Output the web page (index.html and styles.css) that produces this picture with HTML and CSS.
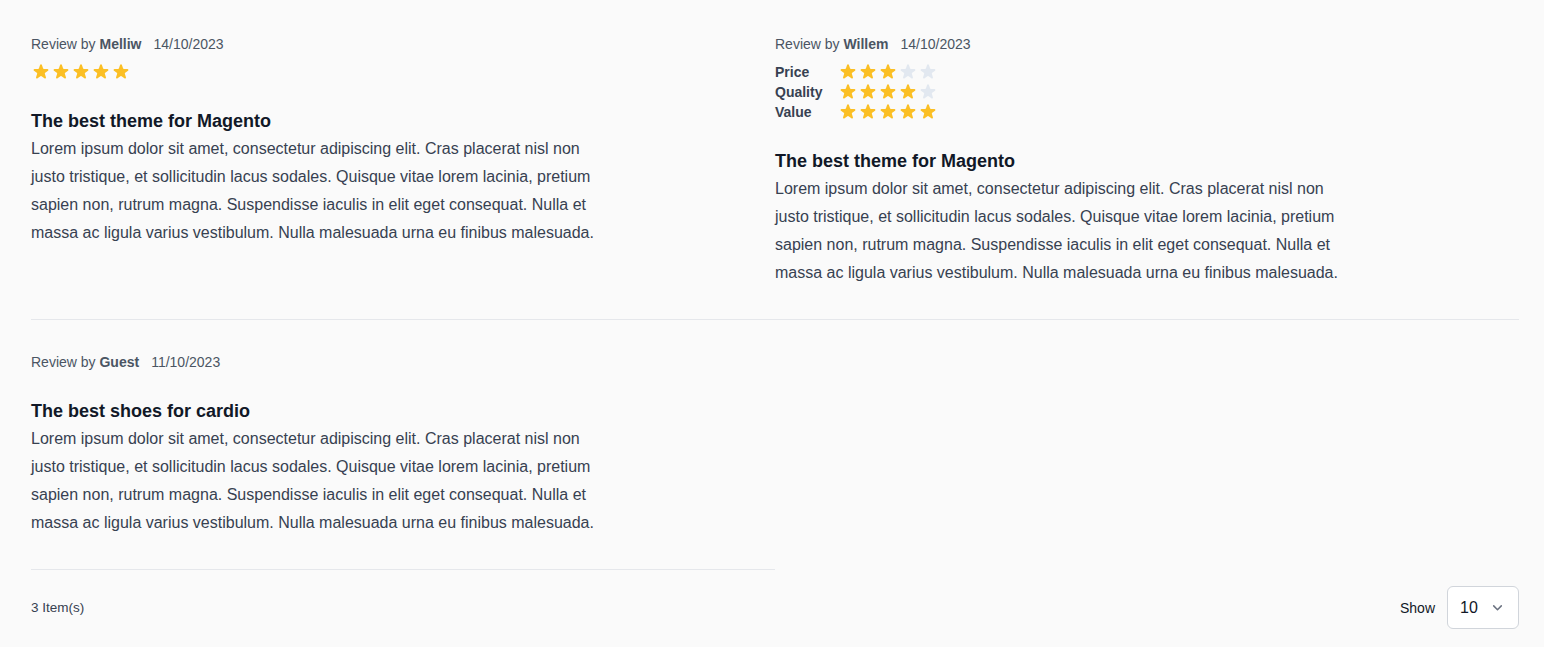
FILE: index.html
```html
<!DOCTYPE html>
<html lang="en">
<head>
<meta charset="utf-8">
<title>Reviews</title>
<link rel="stylesheet" href="styles.css">
</head>
<body>
<svg width="0" height="0" class="defs">
  <defs>
    <path id="star" d="M9.049 2.927c.3-.921 1.603-.921 1.902 0l1.07 3.292a1 1 0 00.95.69h3.462c.969 0 1.371 1.24.588 1.81l-2.8 2.034a1 1 0 00-.364 1.118l1.07 3.292c.3.921-.755 1.688-1.54 1.118l-2.8-2.034a1 1 0 00-1.175 0l-2.8 2.034c-.784.57-1.838-.197-1.539-1.118l1.07-3.292a1 1 0 00-.364-1.118L2.98 8.72c-.783-.57-.38-1.81.588-1.81h3.461a1 1 0 00.951-.69l1.07-3.292z"/>
  </defs>
</svg>
<main class="page">
  <div class="reviews">
    <article class="review">
      <div class="meta">Review by <strong>Melliw</strong><span class="date">14/10/2023</span></div>
      <div class="stars">
        <svg class="star on" viewBox="0 0 20 20"><use href="#star"/></svg>
        <svg class="star on" viewBox="0 0 20 20"><use href="#star"/></svg>
        <svg class="star on" viewBox="0 0 20 20"><use href="#star"/></svg>
        <svg class="star on" viewBox="0 0 20 20"><use href="#star"/></svg>
        <svg class="star on" viewBox="0 0 20 20"><use href="#star"/></svg>
      </div>
      <h3 class="title">The best theme for Magento</h3>
      <p class="body">Lorem ipsum dolor sit amet, consectetur adipiscing elit. Cras placerat nisl non justo tristique, et sollicitudin lacus sodales. Quisque vitae lorem lacinia, pretium sapien non, rutrum magna. Suspendisse iaculis in elit eget consequat. Nulla et massa ac ligula varius vestibulum. Nulla malesuada urna eu finibus malesuada.</p>
    </article>
    <article class="review">
      <div class="meta">Review by <strong>Willem</strong><span class="date">14/10/2023</span></div>
      <div class="ratings">
        <div class="rating-row">
          <span class="label">Price</span>
          <div class="stars-inline">
            <svg class="star on" viewBox="0 0 20 20"><use href="#star"/></svg>
            <svg class="star on" viewBox="0 0 20 20"><use href="#star"/></svg>
            <svg class="star on" viewBox="0 0 20 20"><use href="#star"/></svg>
            <svg class="star off" viewBox="0 0 20 20"><use href="#star"/></svg>
            <svg class="star off" viewBox="0 0 20 20"><use href="#star"/></svg>
          </div>
        </div>
        <div class="rating-row">
          <span class="label">Quality</span>
          <div class="stars-inline">
            <svg class="star on" viewBox="0 0 20 20"><use href="#star"/></svg>
            <svg class="star on" viewBox="0 0 20 20"><use href="#star"/></svg>
            <svg class="star on" viewBox="0 0 20 20"><use href="#star"/></svg>
            <svg class="star on" viewBox="0 0 20 20"><use href="#star"/></svg>
            <svg class="star off" viewBox="0 0 20 20"><use href="#star"/></svg>
          </div>
        </div>
        <div class="rating-row">
          <span class="label">Value</span>
          <div class="stars-inline">
            <svg class="star on" viewBox="0 0 20 20"><use href="#star"/></svg>
            <svg class="star on" viewBox="0 0 20 20"><use href="#star"/></svg>
            <svg class="star on" viewBox="0 0 20 20"><use href="#star"/></svg>
            <svg class="star on" viewBox="0 0 20 20"><use href="#star"/></svg>
            <svg class="star on" viewBox="0 0 20 20"><use href="#star"/></svg>
          </div>
        </div>
      </div>
      <h3 class="title">The best theme for Magento</h3>
      <p class="body">Lorem ipsum dolor sit amet, consectetur adipiscing elit. Cras placerat nisl non justo tristique, et sollicitudin lacus sodales. Quisque vitae lorem lacinia, pretium sapien non, rutrum magna. Suspendisse iaculis in elit eget consequat. Nulla et massa ac ligula varius vestibulum. Nulla malesuada urna eu finibus malesuada.</p>
    </article>
    <article class="review">
      <div class="meta">Review by <strong>Guest</strong><span class="date">11/10/2023</span></div>
      <h3 class="title">The best shoes for cardio</h3>
      <p class="body">Lorem ipsum dolor sit amet, consectetur adipiscing elit. Cras placerat nisl non justo tristique, et sollicitudin lacus sodales. Quisque vitae lorem lacinia, pretium sapien non, rutrum magna. Suspendisse iaculis in elit eget consequat. Nulla et massa ac ligula varius vestibulum. Nulla malesuada urna eu finibus malesuada.</p>
    </article>
  </div>
  <div class="toolbar">
    <span class="count">3 Item(s)</span>
    <div class="limiter">
      <span class="show">Show</span>
      <div class="select">
        <span>10</span>
        <svg class="chev" viewBox="0 0 12 12"><path d="M2.5 4.5 6 8l3.5-3.5" fill="none" stroke="currentColor" stroke-width="1.4" stroke-linecap="round" stroke-linejoin="round"/></svg>
      </div>
    </div>
  </div>
</main>
</body>
</html>
```
FILE: styles.css
```css
* { box-sizing: border-box; }
html, body { margin: 0; padding: 0; }
body {
  background: #fafafa;
  font-family: "Liberation Sans", Arial, Helvetica, sans-serif;
  color: #374151;
}
.defs { position: absolute; width: 0; height: 0; overflow: hidden; }
.page {
  padding: 2px 25px 0 31px;
}
.reviews {
  display: grid;
  grid-template-columns: 1fr 1fr;
}
.review {
  padding: 32px 0;
  border-bottom: 1px solid #e5e7eb;
}
.meta {
  font-size: 14px;
  line-height: 20px;
  color: #4b5563;
}
.meta strong { font-weight: 700; color: #4b5563; }
.meta .date { margin-left: 12px; }
.stars {
  display: flex;
  margin-top: 8px;
  height: 20px;
}
.star { width: 20px; height: 20px; display: block; }
.star.on { fill: #fbbf24; }
.star.off { fill: #e2e8f0; }
.ratings {
  margin-top: 8px;
  display: flex;
  flex-direction: column;
}
.rating-row {
  display: flex;
  align-items: center;
  height: 20px;
}
.label {
  width: 63px;
  font-size: 14px;
  font-weight: 700;
  color: #374151;
}
.stars-inline { display: flex; }
.title {
  margin: 25px 0 0;
  font-size: 18px;
  line-height: 28px;
  font-weight: 700;
  color: #111827;
}
.body {
  margin: 0;
  max-width: 578px;
  font-size: 16px;
  line-height: 28px;
  color: #374151;
}
.toolbar {
  display: flex;
  justify-content: space-between;
  align-items: center;
  padding: 16px 0;
}
.count {
  font-size: 13.5px;
  color: #374151;
}
.limiter {
  display: flex;
  align-items: center;
  gap: 12px;
}
.show {
  font-size: 14px;
  color: #111827;
}
.select {
  width: 72px;
  height: 43px;
  border: 1px solid #d1d5db;
  border-radius: 6px;
  background: #fff;
  display: flex;
  align-items: center;
  justify-content: space-between;
  padding: 0 14px 0 12px;
  font-size: 16px;
  color: #111827;
}
.chev { width: 13px; height: 13px; color: #6b7280; }
```
